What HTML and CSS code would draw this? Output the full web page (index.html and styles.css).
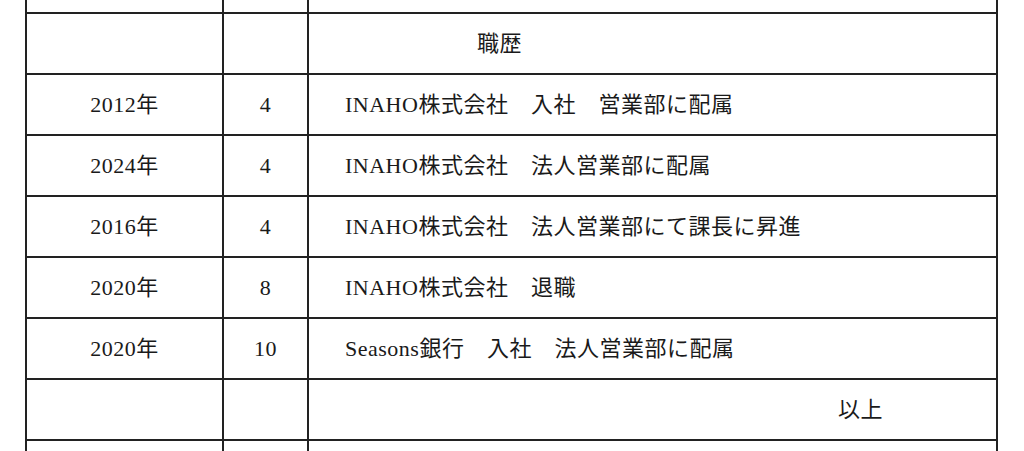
FILE: index.html
```html
<!DOCTYPE html>
<html lang="ja">
<head>
<meta charset="utf-8">
<title>職歴</title>
<link rel="stylesheet" href="styles.css">
</head>
<body>
<div class="sheet">
  <div class="cell"></div><div class="cell"></div><div class="cell"></div>

  <div class="cell"></div><div class="cell"></div><div class="cell text heading">職歴</div>

  <div class="cell center">2012年</div><div class="cell center">4</div><div class="cell text">INAHO株式会社　入社　営業部に配属</div>
  <div class="cell center">2024年</div><div class="cell center">4</div><div class="cell text">INAHO株式会社　法人営業部に配属</div>
  <div class="cell center">2016年</div><div class="cell center">4</div><div class="cell text">INAHO株式会社　法人営業部にて課長に昇進</div>
  <div class="cell center">2020年</div><div class="cell center">8</div><div class="cell text">INAHO株式会社　退職</div>
  <div class="cell center">2020年</div><div class="cell center">10</div><div class="cell text">Seasons銀行　入社　法人営業部に配属</div>

  <div class="cell"></div><div class="cell"></div><div class="cell text end">以上</div>

  <div class="cell last"></div><div class="cell last"></div><div class="cell last"></div>
</div>
</body>
</html>
```

FILE: styles.css
```css
html, body {
  margin: 0;
  padding: 0;
  background: #ffffff;
}

body {
  width: 1024px;
  height: 451px;
  overflow: hidden;
  font-family: "Liberation Serif", "Noto Sans CJK JP", serif;
  font-size: 22px;
  letter-spacing: 0.5px;
  color: #1a1a1a;
}

.sheet {
  display: grid;
  grid-template-columns: 197px 85px 689px;
  grid-template-rows: 14px repeat(7, 61px) 10px;
  margin-left: 25px;
  border-left: 2px solid #222;
  width: 971px;
}

.cell {
  box-sizing: border-box;
  border-right: 2px solid #222;
  border-bottom: 2px solid #222;
  display: flex;
  align-items: center;
  line-height: 1;
  white-space: nowrap;
}

.cell.last {
  border-bottom: none;
}

.center {
  justify-content: center;
}

.text {
  padding-left: 36px;
}

.text.heading {
  padding-left: 168px;
}

.text.end {
  justify-content: flex-end;
  padding-left: 0;
  padding-right: 113px;
}
```
